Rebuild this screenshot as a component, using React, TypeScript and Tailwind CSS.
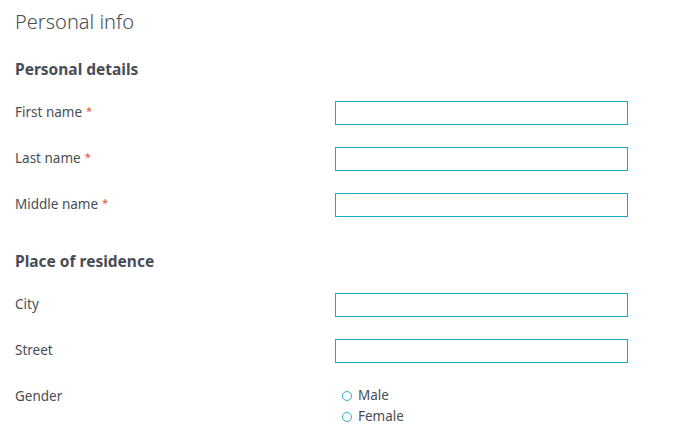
const Req = () => <span className="ml-[4px] text-[11px] text-[#e8503a] relative -top-[2px]">*</span>;

function Row({ label, required }: { label: string; required?: boolean }) {
  return (
    <div className="flex items-center h-[24px]">
      <div className="w-[320px] text-[13.5px] leading-[20px] -mt-[2px]">
        {label}
        {required && <Req />}
      </div>
      <input type="text" className="w-[293px] h-[24px] border border-[#17a8c6] outline-none bg-white" />
    </div>
  );
}

function Radio({ label }: { label: string }) {
  return (
    <label className="flex items-center h-[21px] text-[13.5px]">
      <span className="ml-[7px] w-[10px] h-[10px] rounded-full border-[1.5px] border-[#2bb0ca]" />
      <span className="ml-[6px]">{label}</span>
    </label>
  );
}

export default function App() {
  return (
    <div className="w-[699px] h-[432px] bg-white px-[15px] text-[#474d55] font-['Noto_Sans','Open_Sans',sans-serif] overflow-hidden">
      <div className="h-[44px] flex items-center text-[20px] font-light">Personal info</div>

      <div className="mt-[14px] h-[24px] flex items-center text-[15.5px] font-bold">Personal details</div>
      <div className="mt-[19px] flex flex-col gap-[22px]">
        <Row label="First name" required />
        <Row label="Last name" required />
        <Row label="Middle name" required />
      </div>

      <div className="mt-[33px] h-[24px] flex items-center text-[15.5px] font-bold">Place of residence</div>
      <div className="mt-[19px] flex flex-col gap-[22px]">
        <Row label="City" />
        <Row label="Street" />
        <div className="flex items-start">
          <div className="w-[320px] h-[21px] mt-[1px] flex items-center text-[13.5px]">Gender</div>
          <div className="flex flex-col">
            <Radio label="Male" />
            <Radio label="Female" />
          </div>
        </div>
      </div>
    </div>
  );
}
